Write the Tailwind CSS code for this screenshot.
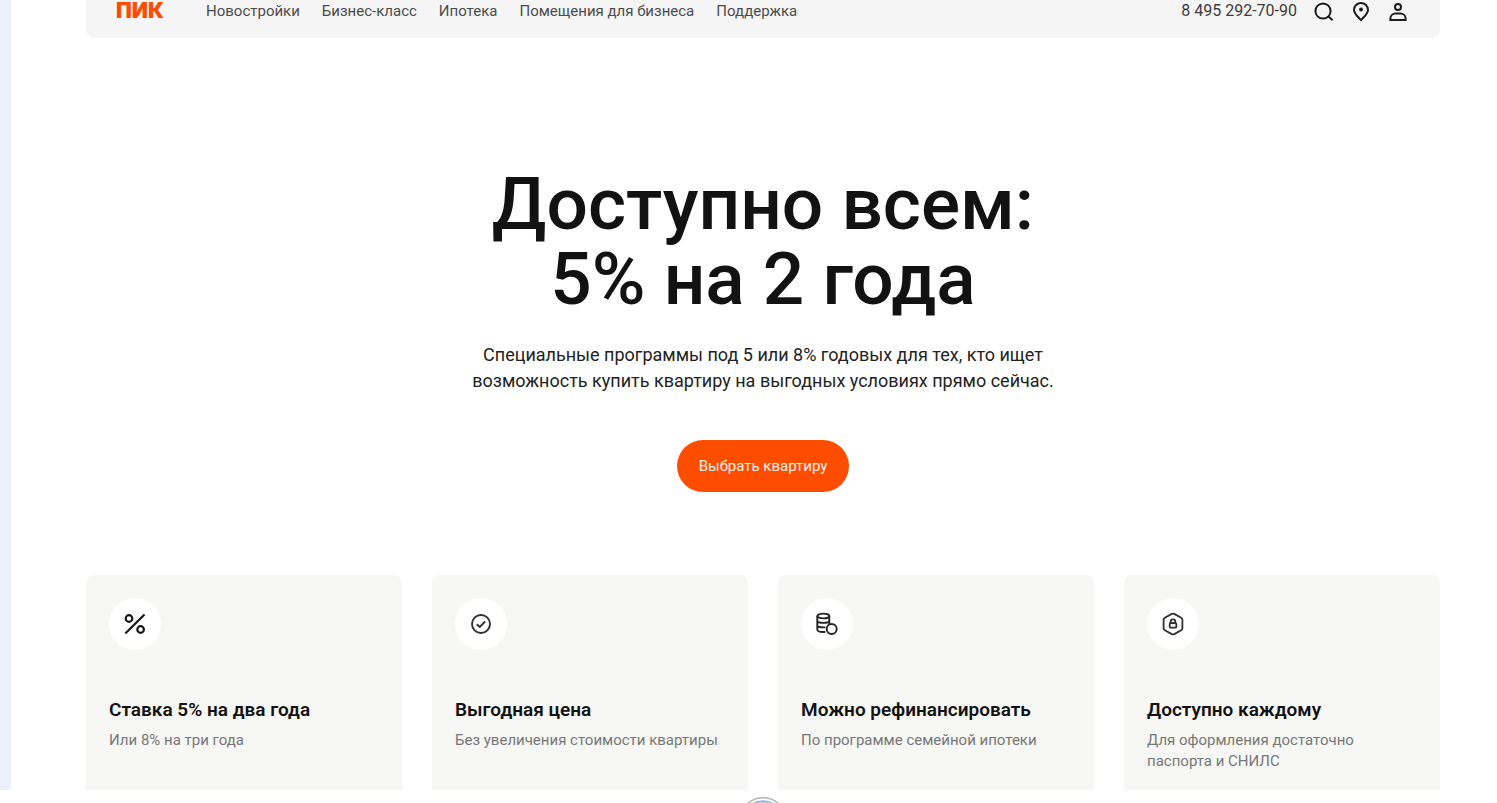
<!DOCTYPE html>
<html lang="ru">
<head>
<meta charset="utf-8">
<meta name="viewport" content="width=device-width, initial-scale=1">
<title>ПИК</title>
<script src="https://cdn.jsdelivr.net/npm/@tailwindcss/browser@4"></script>
</head>
<body class="flex min-h-screen flex-col overflow-x-hidden bg-white font-['Roboto','Liberation_Sans',sans-serif] text-[#121212]">
<div class="flex grow border-l-11 border-[#ebf0fa] pr-[57px] pl-[75px]">
  <div class="flex grow flex-col">
    <header class="flex h-[38px] items-start justify-between rounded-b-lg bg-[#f5f5f5] pr-8 pl-[30px]">
      <div class="flex items-center">
        <a href="#" class="w-[90px] font-['Inter','Liberation_Sans',sans-serif] text-[21px] leading-[22px] font-black text-[#ff4d00]">ПИК</a>
        <nav class="flex gap-[22px] text-[15px] leading-[22px] text-[#4c4c4c]">
          <a href="#">Новостройки</a>
          <a href="#">Бизнес-класс</a>
          <a href="#">Ипотека</a>
          <a href="#">Помещения для бизнеса</a>
          <a href="#">Поддержка</a>
        </nav>
      </div>
      <div class="flex items-start gap-[17px]">
        <a href="tel:+74952927090" class="text-[16px] leading-[22px] text-[#3c3c3c]">8 495 292-70-90</a>
        <button type="button" aria-label="Поиск"><svg class="h-6 w-5" viewBox="0 0 20 24" fill="none" stroke="#1c1c1e" stroke-width="2"><circle cx="9" cy="11" r="7.6"/><path d="M14.5 16.5 18.6 20.3"/></svg></button>
        <button type="button" aria-label="Город"><svg class="h-6 w-5" viewBox="0 0 20 24" fill="none" stroke="#1c1c1e" stroke-width="2"><path d="M10 20.2C6.500 16.200 3 13.400 3 9.900a7 7 0 0 1 14 0c0 3.500-3.500 6.300-7 10.300Z"/><circle cx="10" cy="9.500" r="2" fill="#1c1c1e" stroke="none"/></svg></button>
        <button type="button" aria-label="Профиль"><svg class="h-6 w-5" viewBox="0 0 20 24" fill="none" stroke="#1c1c1e" stroke-width="2"><circle cx="10" cy="7" r="3"/><path d="M2.400 20v-1.500c0-3 2.500-5 5.300-5h4.600c2.800 0 5.300 2 5.300 5V20Z"/></svg></button>
      </div>
    </header>
    <main>
      <section class="flex flex-col items-center pt-[129px] text-center">
        <h1 class="text-[73px] leading-[75px] font-medium">Доступно всем:<br>5% на 2 года</h1>
        <p class="mt-[25px] text-[18px] leading-[26px] text-[#222]">Специальные программы под 5 или 8% годовых для тех, кто ищет<br>возможность купить квартиру на выгодных условиях прямо сейчас.</p>
        <button type="button" class="mt-[46px] h-[52px] rounded-full bg-[#ff4d00] px-[22px] text-[15px] text-[#fff1e8]">Выбрать квартиру</button>
      </section>
      <section class="mt-[83px] grid grid-cols-4 gap-[30px]">
        <article class="h-[215px] rounded-t-lg bg-[#f7f7f5] px-[23px] pt-[23px]">
          <div class="flex size-[52px] items-center justify-center rounded-full bg-white"><svg class="size-6" viewBox="0 0 24 24" fill="none" stroke="#161616" stroke-width="2.200"><circle cx="6" cy="6.500" r="3.300"/><circle cx="17.600" cy="17.500" r="3.300"/><path d="M21.500 2.500 2.300 21.500"/></svg></div>
          <h2 class="mt-[47px] text-[19px] leading-[26px] font-semibold">Ставка 5% на два года</h2>
          <p class="mt-[7px] text-[15px] leading-[21px] text-[#777]">Или 8% на три года</p>
        </article>
        <article class="h-[215px] rounded-t-lg bg-[#f7f7f5] px-[23px] pt-[23px]">
          <div class="flex size-[52px] items-center justify-center rounded-full bg-white"><svg class="size-6" viewBox="0 0 24 24" fill="none" stroke="#303032" stroke-width="1.900"><circle cx="12" cy="12" r="9"/><path d="m7.800 12.200 3 2.700 5.300-5.400"/></svg></div>
          <h2 class="mt-[47px] text-[19px] leading-[26px] font-semibold">Выгодная цена</h2>
          <p class="mt-[7px] text-[15px] leading-[21px] text-[#777]">Без увеличения стоимости квартиры</p>
        </article>
        <article class="h-[215px] rounded-t-lg bg-[#f7f7f5] px-[23px] pt-[23px]">
          <div class="flex size-[52px] items-center justify-center rounded-full bg-white"><svg class="size-6" viewBox="0 0 24 24" fill="none" stroke="#242426" stroke-width="1.900"><ellipse cx="8.300" cy="4" rx="6" ry="2.400"/><path d="M2.300 4v13.500c0 1.500 2.700 2.500 6 2.500h2M14.300 4v8M2.300 8.500c0 1.500 2.700 2.400 6 2.400s6-.900 6-2.400M2.300 13c0 1.500 2.700 2.400 6 2.400h2"/><circle cx="16.700" cy="17" r="5"/></svg></div>
          <h2 class="mt-[47px] text-[19px] leading-[26px] font-semibold">Можно рефинансировать</h2>
          <p class="mt-[7px] text-[15px] leading-[21px] text-[#777]">По программе семейной ипотеки</p>
        </article>
        <article class="h-[215px] rounded-t-lg bg-[#f7f7f5] px-[23px] pt-[23px]">
          <div class="flex size-[52px] items-center justify-center rounded-full bg-white"><svg class="size-6" viewBox="0 0 24 24" fill="none" stroke="#303032" stroke-width="1.800" stroke-linejoin="round"><path d="M10.800 1.900q1.200-.6 2.400 0l7 3.900q1.200.7 1.200 2v8.400q0 1.300-1.200 2l-7 3.900q-1.200.6-2.400 0l-7-3.900q-1.200-.7-1.200-2V7.800q0-1.300 1.200-2Z"/><path d="M9.700 10.800V9.700a2.300 2.300 0 0 1 4.600 0v1.100"/><rect x="8.700" y="11" width="6.600" height="4.700" rx="1"/></svg></div>
          <h2 class="mt-[47px] text-[19px] leading-[26px] font-semibold">Доступно каждому</h2>
          <p class="mt-[7px] text-[15px] leading-[21px] text-[#777]">Для оформления достаточно<br>паспорта и СНИЛС</p>
        </article>
      </section>
    </main>
  </div>
</div>
<footer class="flex h-[13px] items-start justify-center overflow-hidden pr-[57px] pl-[86px]">
  <svg class="mt-[7px] size-12 shrink-0" viewBox="0 0 48 48" fill="none"><circle cx="24" cy="24" r="23.200" stroke="#b4b4b4" stroke-width="1.500"/><circle cx="24" cy="24" r="20" fill="#b9d2f0" stroke="#8fb4e2" stroke-width="1.500"/></svg>
</footer>
</body>
</html>
